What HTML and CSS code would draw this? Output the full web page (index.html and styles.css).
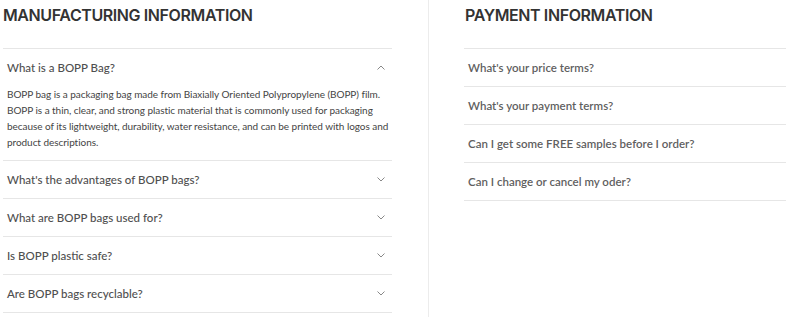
FILE: index.html
```html
<!DOCTYPE html>
<html lang="en">
<head>
  <meta charset="UTF-8" />
  <meta name="viewport" content="width=device-width, initial-scale=1.0"/>
  <title>FAQ</title>
  <link rel="stylesheet" href="styles.css">
</head>
<body>
  <div class="faq">

    <!-- Manufacturing -->
    <section class="col col-left">
      <h2>MANUFACTURING INFORMATION</h2>
      <div class="list">
        <div class="item open">
          <div class="question">
            <span>What is a BOPP Bag?</span>
            <svg class="chev" width="8" height="5" viewBox="0 0 8 5"><polyline points="0.5,4.5 4,1 7.5,4.5" /></svg>
          </div>
          <p class="answer">BOPP bag is a packaging bag made from Biaxially Oriented Polypropylene (BOPP) film. BOPP is a thin, clear, and strong plastic material that is commonly used for packaging because of its lightweight, durability, water resistance, and can be printed with logos and product descriptions.</p>
        </div>
        <div class="item">
          <div class="question">
            <span>What's the advantages of BOPP bags?</span>
            <svg class="chev" width="8" height="5" viewBox="0 0 8 5"><polyline points="0.5,0.5 4,4 7.5,0.5" /></svg>
          </div>
        </div>
        <div class="item">
          <div class="question">
            <span>What are BOPP bags used for?</span>
            <svg class="chev" width="8" height="5" viewBox="0 0 8 5"><polyline points="0.5,0.5 4,4 7.5,0.5" /></svg>
          </div>
        </div>
        <div class="item">
          <div class="question">
            <span>Is BOPP plastic safe?</span>
            <svg class="chev" width="8" height="5" viewBox="0 0 8 5"><polyline points="0.5,0.5 4,4 7.5,0.5" /></svg>
          </div>
        </div>
        <div class="item">
          <div class="question">
            <span>Are BOPP bags recyclable?</span>
            <svg class="chev" width="8" height="5" viewBox="0 0 8 5"><polyline points="0.5,0.5 4,4 7.5,0.5" /></svg>
          </div>
        </div>
      </div>
    </section>

    <!-- Payment -->
    <section class="col col-right">
      <h2>PAYMENT INFORMATION</h2>
      <div class="list">
        <div class="item"><div class="question bold"><span>What's your price terms?</span></div></div>
        <div class="item"><div class="question bold"><span>What's your payment terms?</span></div></div>
        <div class="item"><div class="question bold"><span>Can I get some FREE samples before I order?</span></div></div>
        <div class="item"><div class="question bold"><span>Can I change or cancel my oder?</span></div></div>
      </div>
    </section>

  </div>
</body>
</html>
```

FILE: styles.css
```css
body {
  margin: 0;
  font-family: 'Lato', sans-serif;
  background: #fff;
  color: #555;
}

.faq {
  display: flex;
  min-height: 317px;
}

.col-left {
  width: 389px;
  margin-left: 3px;
}

.col-right {
  flex: 1;
  margin-left: 36px;
  border-left: 1px solid #ececec;
  padding-left: 35px;
}

h2 {
  margin: 0;
  height: 48px;
  padding-top: 4px;
  box-sizing: border-box;
  font-family: 'Inter', sans-serif;
  font-weight: 600;
  font-size: 16px;
  line-height: 22px;
  color: #333;
  letter-spacing: -0.4px;
}

.col-right h2 {
  margin-left: 1px;
}

.item {
  border-top: 1px solid #e6e6e6;
}

.list {
  border-bottom: 1px solid #e6e6e6;
}

.question {
  display: flex;
  align-items: center;
  justify-content: space-between;
  height: 37px;
  padding: 0 7px 0 4px;
  font-size: 11.5px;
  font-weight: 500;
  color: #4f4f4f;
}

.question.bold {
  font-weight: 600;
  color: #5f5f5f;
}

.chev {
  fill: none;
  stroke: #888;
  stroke-width: 1;
}

.answer {
  margin: 0;
  padding: 0 0 10px 4px;
  font-size: 10px;
  line-height: 16px;
  letter-spacing: -0.05px;
  color: #444;
}
```
